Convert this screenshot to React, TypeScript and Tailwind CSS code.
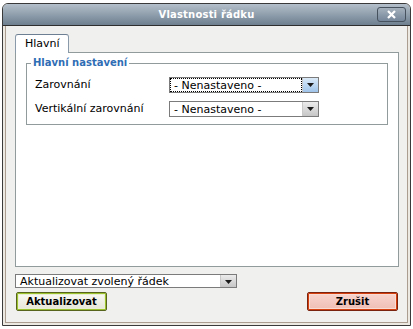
const Arrow = () => (
  <svg width="7" height="4" viewBox="0 0 7 4" className="mt-[5px]">
    <path d="M0 0h7L3.5 4z" fill="#1a1a1a" />
  </svg>
);

const Select = ({
  value,
  width,
  height,
  focused = false,
}: {
  value: string;
  width: string;
  height: string;
  focused?: boolean;
}) => (
  <div className={`flex ${width} ${height} border border-[#7b7b7b] bg-white`}>
    <div
      className={`flex-1 flex items-center pl-[4px] leading-none ${
        focused ? "outline-1 outline-dotted outline-black -outline-offset-1" : ""
      }`}
    >
      {value}
    </div>
    <div
      className={`w-[16px] flex justify-center border-l border-[#c8c8c8] ${
        focused
          ? "bg-gradient-to-b from-[#dbeaf8] to-[#9fc4ea]"
          : "bg-gradient-to-b from-[#ececec] to-[#c6c6c6]"
      }`}
    >
      <Arrow />
    </div>
  </div>
);

const App = () => {
  return (
    <div className="w-[413px] h-[329px] bg-white pt-[3px] pl-[2px] font-['DejaVu_Sans',sans-serif] text-[11px] text-black">
      <div className="w-[409px] h-[323px] flex flex-col rounded-t-[6px] border border-[#3a3a3a] bg-[#ece9e2] overflow-hidden">
        {/* title bar */}
        <div className="h-[22px] relative flex items-center justify-center border-b border-[#2e2e2e] bg-gradient-to-b from-[#b4c0cb] to-[#6e7f8f]">
          <span className="text-white font-bold text-[10px] tracking-[0.2px]">
            Vlastnosti řádku
          </span>
          <button className="absolute right-[4px] top-[3px] w-[29px] h-[15px] rounded-[3px] border border-[#46525e] bg-gradient-to-b from-[#a5b1bc] to-[#75869a] flex items-center justify-center">
            <svg width="9" height="9" viewBox="0 0 9 9">
              <path d="M1 1l7 7M8 1L1 8" stroke="white" strokeWidth="2.2" />
            </svg>
          </button>
        </div>

        {/* body */}
        <div className="flex-1 px-[2px] pb-[2px]">
          <div className="h-full border-x border-b border-[#ab9e90] bg-[#f0f0ee] pl-[9px] pt-[8px]">
            {/* tab */}
            <div className="relative z-10 -mb-[1px] w-[54px] h-[19px] rounded-t-[3px] border border-b-0 border-[#8a9aaa] border-t-[#6d7f92] bg-white pl-[9px] pt-[2px] leading-[14px]">
              Hlavní
            </div>
            {/* panel */}
            <div className="w-[384px] h-[215px] border border-[#919b9c] bg-white pt-[4px] pl-[10px]">
              <fieldset className="w-[362px] border border-[#919b9c] pb-[7px]">
                <legend className="ml-[4px] px-[2px] text-[10px] font-bold text-[#2f6db5] leading-[12px]">
                  Hlavní nastavení
                </legend>
                <div className="flex flex-col gap-[8px] pl-[8px] mt-[8px]">
                  <div className="flex items-center h-[16px]">
                    <span className="w-[134px]">Zarovnání</span>
                    <Select
                      value="- Nenastaveno -"
                      width="w-[150px]"
                      height="h-[16px]"
                      focused
                    />
                  </div>
                  <div className="flex items-center h-[16px]">
                    <span className="w-[134px]">Vertikální zarovnání</span>
                    <Select value="- Nenastaveno -" width="w-[150px]" height="h-[16px]" />
                  </div>
                </div>
              </fieldset>
            </div>

            {/* bottom select */}
            <div className="mt-[7px]">
              <Select value="Aktualizovat zvolený řádek" width="w-[222px]" height="h-[14px]" />
            </div>

            {/* buttons */}
            <div className="mt-[4px] flex justify-between w-[383px] pl-[1px]">
              <button className="w-[91px] h-[19px] rounded-[2px] border border-[#56641c] shadow-[inset_0_0_0_1px_#9cc230,inset_0_0_0_2px_#e8efd2] bg-gradient-to-b from-[#fbfbf6] to-[#e6e4d6] text-[10px] font-bold leading-none">
                Aktualizovat
              </button>
              <button className="w-[91px] h-[19px] rounded-[2px] border border-[#7a2410] shadow-[inset_0_0_0_1px_#d6400f,inset_0_0_0_2px_#f9dcd4] bg-gradient-to-b from-[#f8d6cf] to-[#efbdb3] text-[10px] font-bold leading-none">
                Zrušit
              </button>
            </div>
          </div>
        </div>
      </div>
    </div>
  );
};

export default App;
